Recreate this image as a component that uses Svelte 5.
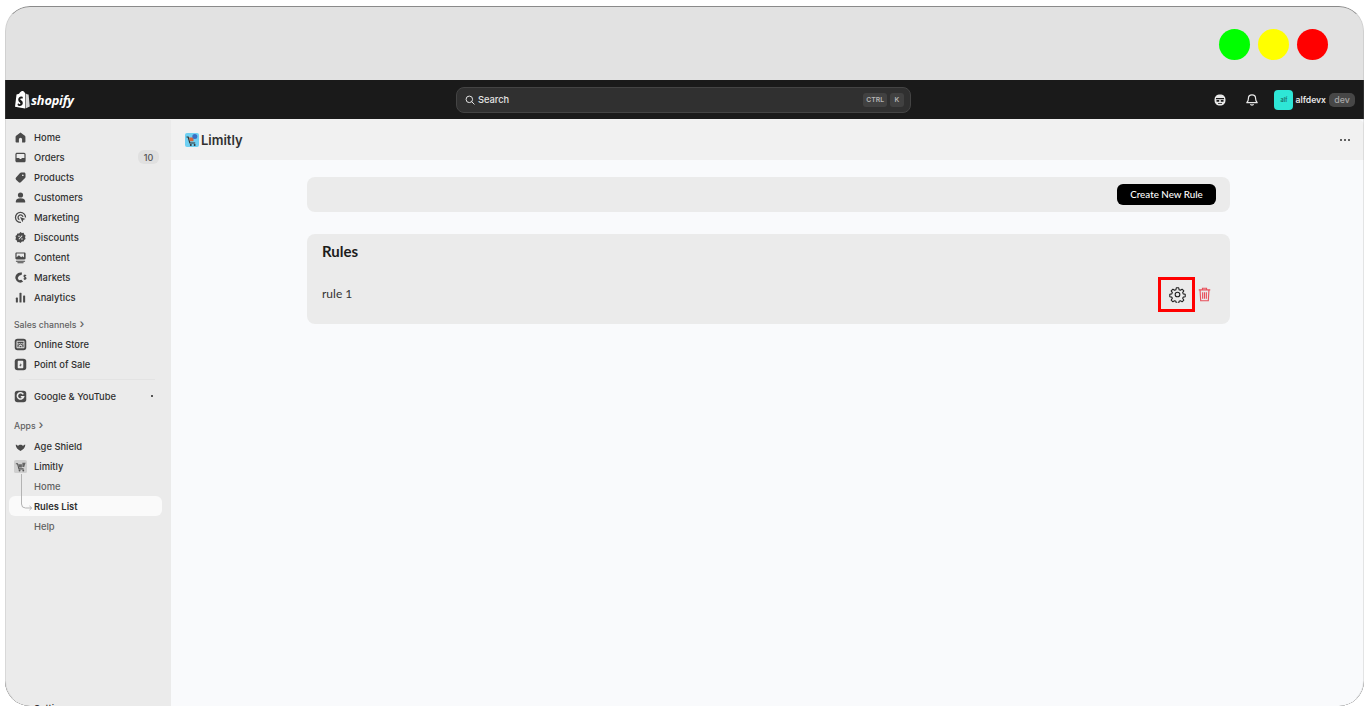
<script lang="ts">
	// Sidebar rows, icon is looked up by name in the markup below
	const mainNav = [
		{ label: 'Home', icon: 'home' },
		{ label: 'Orders', icon: 'orders', badge: '10' },
		{ label: 'Products', icon: 'products' },
		{ label: 'Customers', icon: 'customers' },
		{ label: 'Marketing', icon: 'marketing' },
		{ label: 'Discounts', icon: 'discounts' },
		{ label: 'Content', icon: 'content' },
		{ label: 'Markets', icon: 'markets' },
		{ label: 'Analytics', icon: 'analytics' }
	];
	const channels = [
		{ label: 'Online Store', icon: 'store' },
		{ label: 'Point of Sale', icon: 'pos' }
	];
</script>

{#snippet navIcon(name: string)}
	<svg class="nav-icon" viewBox="0 0 14 14" fill="#4a4a4a" aria-hidden="true">
		{#if name === 'home'}
			<path d="M7 1.600 2.300 5.200c-.4.300-.6.700-.6 1.200v4.800c0 .7.500 1.200 1.200 1.200h2.400V9a1.700 1.700 0 0 1 3.400 0v3.400h2.400c.7 0 1.200-.5 1.200-1.200V6.400c0-.5-.2-.9-.6-1.200L7 1.600Z" />
		{:else if name === 'orders'}
			<path fill-rule="evenodd" d="M3.200 1.800h7.600c1 0 1.700.8 1.700 1.700v7c0 1-.8 1.700-1.700 1.700H3.200c-1 0-1.700-.8-1.700-1.700v-7c0-1 .8-1.700 1.700-1.700Zm0 1.400a.4.4 0 0 0-.4.3v4h2.400c.3 0 .5.2.6.4l.4.8h1.600l.4-.8c.1-.2.3-.4.6-.4h2.400v-4a.4.4 0 0 0-.4-.3H3.200Z" />
		{:else if name === 'products'}
			<path fill-rule="evenodd" d="M7.600 1.700h3.200c.9 0 1.600.7 1.600 1.600v3.200c0 .4-.2.8-.5 1.100l-4.600 4.600c-.6.600-1.600.6-2.200 0L2.200 9.300c-.6-.6-.6-1.600 0-2.200l4.300-4.900c.3-.3.700-.5 1.100-.5Zm1.900 2a.9.900 0 1 0 0 1.800.9.900 0 0 0 0-1.800Z" />
		{:else if name === 'customers'}
			<circle cx="7" cy="4.300" r="2.800" /><path d="M2 11c0-2 1.800-3.100 5-3.100s5 1.100 5 3.100v1.400H2V11Z" />
		{:else if name === 'marketing'}
			<path fill="none" stroke="#4a4a4a" stroke-width="1.400" d="M7.500 12.300A5.400 5.400 0 1 1 12.400 7M5.800 9.300A2.700 2.700 0 1 1 9.700 6.400" /><path d="m6.500 6.500 6 2-2.400 1-1 2.600-2.600-5.600Z" />
		{:else if name === 'discounts'}
			<path fill-rule="evenodd" d="m7 1 1.500 1.100 1.900-.1.600 1.800 1.500 1.100-.6 1.800.6 1.800-1.500 1.100-.6 1.800-1.900-.1L7 13l-1.500-1.100-1.900.1L3 10.200 1.500 9.100 2.100 7.300 1.500 5.500 3 4.400l.6-1.800 1.900.1L7 1Zm1.500 3.600L4.900 8.500l.7.7 3.600-3.900-.7-.7ZM5.400 4.900a.8.800 0 1 0 0 1.600.8.800 0 0 0 0-1.600Zm3.200 2.800a.8.800 0 1 0 0 1.600.8.800 0 0 0 0-1.600Z" />
		{:else if name === 'content'}
			<path fill-rule="evenodd" d="M2.800 1.500h8.400c.8 0 1.300.6 1.300 1.300v5c0 .8-.6 1.300-1.300 1.300H2.800c-.8 0-1.300-.6-1.300-1.300v-5c0-.8.6-1.300 1.300-1.300Zm0 1.200v4l2.500-2 2.400 2 1.400-1 1.700 1.200V2.700H2.800Z" /><rect x="2" y="10.400" width="10" height="1.100" rx=".5" /><rect x="3.500" y="12.200" width="7" height="1" rx=".5" />
		{:else if name === 'markets'}
			<path fill-rule="evenodd" d="M7 1.500a5.500 5.500 0 1 0 2.800 10.200L8 9.500l-2.700.4L4 7.500 5.500 5l2.800-1L8.600 1.700A5.500 5.500 0 0 0 7 1.500Z" /><path fill="none" stroke="#4a4a4a" stroke-width="1.100" d="M13 5.200c-.3-.7-2.200-.9-2.300.3-.1 1.300 2.400 1 2.300 2.300-.1 1.200-2 1.100-2.500.2M11.700 3.800v6" />
		{:else if name === 'analytics'}
			<rect x="2" y="7" width="2.200" height="5.500" rx=".7" /><rect x="5.900" y="2" width="2.200" height="10.500" rx=".7" /><rect x="9.800" y="4.800" width="2.200" height="7.700" rx=".7" />
		{:else if name === 'store'}
			<rect x=".8" y=".8" width="12.400" height="12.400" rx="3" /><path fill="none" stroke="#ebebeb" stroke-width="1" d="M3.200 3.500h7.600v7H3.200zM3.200 5.800c1 1 1.800 1 2.500 0 .8 1 1.800 1 2.600 0 .7 1 1.500 1 2.500 0M5.500 10.500V8h3v2.500" />
		{:else if name === 'pos'}
			<rect x=".8" y=".8" width="12.400" height="12.400" rx="3" /><path fill="#ebebeb" fill-rule="evenodd" d="M5 3h4.200c.5 0 .8.3.8.8v6.400c0 .5-.3.8-.8.8H4.800a.8.800 0 0 1-.8-.8V4c0-.5.400-1 1-1Zm2.300 2-1.500 3.300h1.300L6.600 10l1.800-3H7l.3-2Z" />
		{:else if name === 'google'}
			<rect x=".8" y=".8" width="12.400" height="12.400" rx="3" /><path fill="none" stroke="#ebebeb" stroke-width="1.700" d="M10 4.700A3.400 3.400 0 1 0 10.300 7.200H7.300" />
		{:else if name === 'age'}
			<path d="M1.800 5.200c1.300 0 2 .6 2.400 1.300.7-1 1.700-1.300 2.800-1.300s2.100.3 2.800 1.300c.4-.7 1.100-1.300 2.400-1.300-.2 3-2.200 5.400-5.200 6.600-3-1.200-5-3.600-5.200-6.600Z" />
		{/if}
	</svg>
{/snippet}

<div class="window">
	<div class="chrome">
		<span class="light green"></span>
		<span class="light yellow"></span>
		<span class="light red"></span>
	</div>

	<header class="topbar">
		<div class="brand">
			<svg class="bag" viewBox="0 0 16 18" aria-hidden="true">
				<path fill="#fff" d="M11.300 2.500 10.500 1.900C10 .8 9.200.3 8.400.4 7 .5 5.800 1.700 5.100 3.300L2.500 4.100 1 16.200l10 1.800V2.600l.3-.1Z" />
				<path fill="#d8d8d8" d="M11.500 2.700 13 3.800l1.600.2L15.800 16l-4.300 2V2.700Z" />
				<path fill="#1a1a1a" d="M8.900 6.500 8.400 8.200c-.5-.2-1-.3-1.400-.2-.8.100-.9.600-.7 1 .5.800 2.500 1.300 2.500 3.400 0 2-1.500 3-3 3-1 0-1.900-.5-2.300-1l.5-1.600c.5.400 1.200.9 1.700.9.500 0 .8-.5.700-.9-.3-1.100-2.200-1.400-2.200-3.500 0-1.800 1.200-3.200 3-3.300.8-.1 1.400.2 1.700.5Z" />
			</svg>
			<span class="wordmark">shopify</span>
		</div>

		<div class="search">
			<svg class="search-icon" viewBox="0 0 12 12" fill="none" stroke="#e3e3e3" stroke-width="1.200" aria-hidden="true">
				<circle cx="5.200" cy="5.200" r="3.900" /><path d="m8 8 3 3" stroke-linecap="round" />
			</svg>
			<span class="search-text">Search</span>
			<kbd class="key">CTRL</kbd>
			<kbd class="key">K</kbd>
		</div>

		<div class="account">
			<svg class="top-icon" viewBox="0 0 14 14" aria-hidden="true">
				<path fill="#e8e8e8" d="M7 1.500c3.300 0 5.500 1.800 5.500 5.500S10.300 12.500 7 12.500 1.500 10.700 1.500 7 3.700 1.500 7 1.500Z" />
				<path fill="#1a1a1a" d="M3 5h8v1.200H3zM3.500 7h2.700v1.800H3.500zM7.800 7h2.700v1.800H7.800zM5 10.200h4v.9H5z" />
			</svg>
			<svg class="top-icon bell" viewBox="0 0 14 14" fill="none" stroke="#e8e8e8" stroke-width="1.200" aria-hidden="true">
				<path d="M7 1.800c-2.200 0-3.600 1.600-3.600 3.600 0 2.400-1 3.300-1.600 4.300h10.400c-.6-1-1.600-1.900-1.600-4.300 0-2-1.400-3.600-3.600-3.600Z" stroke-linejoin="round" /><path d="M5.400 11.300c.4 1 2.800 1 3.200 0" />
			</svg>
			<span class="avatar">alf</span>
			<span class="store-name">alfdevx</span>
			<span class="dev">dev</span>
		</div>
	</header>

	<div class="body">
		<nav class="sidebar">
			{#each mainNav as item}
				<div class="row">
					{@render navIcon(item.icon)}
					<span>{item.label}</span>
					{#if item.badge}<span class="badge">{item.badge}</span>{/if}
				</div>
			{/each}

			<div class="section-title">Sales channels <span class="chev">›</span></div>
			{#each channels as item}
				<div class="row">
					{@render navIcon(item.icon)}
					<span>{item.label}</span>
				</div>
			{/each}

			<hr class="rule" />

			<div class="row">
				{@render navIcon('google')}
				<span>Google &amp; YouTube</span>
				<span class="pin"></span>
			</div>

			<div class="section-title apps">Apps <span class="chev">›</span></div>
			<div class="row">
				{@render navIcon('age')}
				<span>Age Shield</span>
			</div>
			<div class="row">
				<svg class="nav-icon" viewBox="0 0 14 14" aria-hidden="true">
					<rect width="14" height="14" rx="2" fill="#cfcfcf" />
					<path fill="none" stroke="#555" stroke-width="1.200" d="M2 4h1.800l1.500 5.500h5" />
					<path fill="#666" d="M4.500 4.500h4v3.500h-3zM9 3h3.500L11 7.500H9z" />
					<circle cx="6" cy="11.300" r="1" fill="#555" /><circle cx="10" cy="11.300" r="1" fill="#555" />
				</svg>
				<span>Limitly</span>
			</div>
			<div class="sub-list">
				<svg class="tree" viewBox="0 0 16 48" fill="none" stroke="#b3b3b3" stroke-width="1" aria-hidden="true">
					<path d="M2.500 0v30q0 4 4 4h6M10.500 32l2.200 2-2.200 2" />
				</svg>
				<div class="row sub">Home</div>
				<div class="row sub active">Rules List</div>
				<div class="row sub">Help</div>
			</div>

			<div class="row settings"><span>Settings</span></div>
		</nav>

		<main class="content">
			<div class="page-head">
				<svg class="app-logo" viewBox="0 0 14 14" aria-hidden="true">
					<rect width="14" height="14" rx="2" fill="#6fd0f2" />
					<path fill="none" stroke="#333" stroke-width="1.200" d="M1.500 4h1.700l1.600 6h5.400" />
					<path fill="#d9653b" d="M4 4.500h4.500v3.700H5z" />
					<circle cx="9.800" cy="3.600" r="2.500" fill="#3a6fc4" />
					<circle cx="5.800" cy="12" r="1" fill="#333" /><circle cx="9.600" cy="12" r="1" fill="#333" />
				</svg>
				<h1>Limitly</h1>
				<svg class="more" viewBox="0 0 10 2" fill="#303030" aria-hidden="true">
					<circle cx="1" cy="1" r="1" /><circle cx="5" cy="1" r="1" /><circle cx="9" cy="1" r="1" />
				</svg>
			</div>

			<div class="page">
				<section class="card action-card">
					<button type="button" class="primary">Create New Rule</button>
				</section>

				<section class="card rules-card">
					<h2>Rules</h2>
					<div class="rule-row">
						<span class="rule-name">rule 1</span>
						<span class="gear-box">
							<svg viewBox="0 0 24 24" width="17" height="17" fill="none" stroke="#1f1f1f" stroke-width="1.500" stroke-linejoin="round" aria-hidden="true">
								<circle cx="12" cy="12" r="3.300" />
								<path d="M10.300 2.500h3.400l.6 2.900 1.700.7 2.500-1.600 2.400 2.400-1.600 2.500.7 1.700 2.900.6v3.400l-2.900.6-.7 1.700 1.600 2.500-2.400 2.400-2.500-1.600-1.700.7-.6 2.900h-3.400l-.6-2.900-1.700-.7-2.500 1.600-2.400-2.400 1.600-2.500-.7-1.700-2.900-.6v-3.400l2.900-.6.7-1.700-1.600-2.500 2.400-2.400 2.500 1.600 1.700-.7.6-2.900Z" />
							</svg>
						</span>
						<svg class="trash" viewBox="0 0 14 16" fill="none" stroke="#e8505b" stroke-width="1.200" aria-hidden="true">
							<path d="M.8 3h12.400M4.800 3V1.200h4.400V3M2.200 3l.7 11.800h8.200L11.800 3M5 5.500v7M7 5.500v7M9 5.500v7" />
						</svg>
					</div>
				</section>
			</div>
		</main>
	</div>
</div>

<style>
	:global(body) {
		background: #fff;
	}

	.window {
		width: 1359px;
		height: 700px;
		margin: 6px 0 0 5px;
		border-radius: 25px;
		overflow: hidden;
		display: flex;
		flex-direction: column;
		font-family: Inter, 'Liberation Sans', sans-serif;
		background: #e2e2e2;
		position: relative;
	}

	/* thin frame line, strongest along the top edge */
	.window::after {
		content: '';
		position: absolute;
		inset: 0;
		border-radius: 25px;
		border: 1px solid transparent;
		border-top-color: #8a8a8a;
		border-left-color: rgba(138, 138, 138, 0.2);
		border-right-color: rgba(138, 138, 138, 0.2);
		pointer-events: none;
	}

	.chrome {
		height: 74px;
		flex: none;
		display: flex;
		justify-content: flex-end;
		align-items: center;
		gap: 8px;
		padding: 2px 36px 0 0;
		box-sizing: border-box;
	}

	.light {
		width: 31px;
		height: 31px;
		border-radius: 50%;
	}

	.green {
		background: #00ff00;
	}

	.yellow {
		background: #ffff00;
	}

	.red {
		background: #ff0000;
	}

	.topbar {
		height: 39px;
		flex: none;
		background: #1a1a1a;
		display: grid;
		grid-template-columns: 1fr 455px 1fr;
		align-items: center;
		padding: 0 9px 0 9px;
		box-sizing: border-box;
	}

	.brand {
		display: flex;
		align-items: center;
		gap: 1px;
	}

	.bag {
		width: 16px;
		height: 19px;
	}

	.wordmark {
		font-family: 'Open Sans', sans-serif;
		font-style: italic;
		font-weight: 700;
		font-size: 12.800px;
		color: #fff;
		letter-spacing: -0.2px;
	}

	.search {
		height: 26px;
		background: #303030;
		border: 1px solid #444;
		border-radius: 8px;
		box-sizing: border-box;
		display: flex;
		align-items: center;
		gap: 3px;
		padding: 0 6px 0 8px;
		margin-left: -1px;
		width: 455px;
	}

	.search-icon {
		width: 10px;
		height: 10px;
	}

	.search-text {
		font-size: 9.300px;
		font-weight: 500;
		color: #e3e3e3;
		flex: 1;
	}

	.key {
		font-family: Inter, sans-serif;
		font-size: 6.800px;
		font-weight: 600;
		color: #b5b5b5;
		background: #414141;
		border-radius: 3px;
		height: 14px;
		padding: 0 3px;
		min-width: 8px;
		display: flex;
		align-items: center;
		justify-content: center;
	}

	.account {
		display: flex;
		align-items: center;
		justify-content: flex-end;
		color: #e8e8e8;
	}

	.top-icon {
		width: 14px;
		height: 14px;
		margin-right: 18px;
	}

	.bell {
		margin-right: 15px;
	}

	.avatar {
		width: 19px;
		height: 20px;
		background: #2ee6d6;
		border-radius: 4px;
		font-size: 5.500px;
		font-weight: 600;
		color: #1b6d66;
		display: flex;
		align-items: center;
		justify-content: center;
	}

	.store-name {
		font-size: 8.600px;
		font-weight: 600;
		margin-left: 2px;
	}

	.dev {
		font-size: 8.800px;
		font-weight: 500;
		color: #a8a8a8;
		background: #474747;
		border-radius: 5px;
		height: 14px;
		width: 26px;
		margin-left: 3px;
		display: flex;
		align-items: center;
		justify-content: center;
	}

	.body {
		flex: 1;
		min-height: 0;
		display: flex;
		border-top: 1px solid #f1f1f1;
		background: #1a1a1a;
	}

	.sidebar {
		width: 166px;
		flex: none;
		background: #ebebeb;
		padding: 7px 0 0 4px;
		box-sizing: border-box;
		overflow: hidden;
		display: flex;
		flex-direction: column;
	}

	.row {
		height: 20px;
		flex: none;
		display: flex;
		align-items: center;
		width: 153px;
		padding-left: 5px;
		box-sizing: border-box;
		font-size: 9.400px;
		font-weight: 500;
		color: #303030;
		border-radius: 6px;
		position: relative;
	}

	.nav-icon {
		width: 13px;
		height: 13px;
		flex: none;
		margin-right: 7px;
	}

	.badge {
		margin-left: auto;
		margin-right: 3px;
		background: #e0e0e0;
		color: #555;
		font-size: 9px;
		border-radius: 6px;
		width: 21px;
		height: 14px;
		display: flex;
		align-items: center;
		justify-content: center;
	}

	.section-title {
		height: 20px;
		margin: 8px 0 -1px;
		padding-left: 5px;
		font-size: 8.700px;
		font-weight: 500;
		color: #616161;
		display: flex;
		align-items: center;
		gap: 3px;
		flex: none;
	}

	.section-title.apps {
		margin: 10px 0 0;
	}

	.chev {
		font-size: 12px;
		line-height: 1;
		margin-top: -2px;
	}

	.rule {
		width: 136px;
		margin: 5px 0 6px 10px;
		border: 0;
		border-top: 1px solid #e3e3e3;
		flex: none;
	}

	.pin {
		width: 2.500px;
		height: 2.500px;
		border-radius: 50%;
		background: #222;
		margin-left: auto;
		margin-right: 9px;
	}

	.sub-list {
		position: relative;
		flex: none;
	}

	.tree {
		position: absolute;
		left: 10px;
		top: -2px;
		width: 16px;
		height: 48px;
		z-index: 1;
	}

	.sub {
		padding-left: 25px;
		color: #616161;
	}

	.active {
		background: #fafafa;
		color: #303030;
		font-weight: 600;
	}

	/* only the tops of the letters show at the window's bottom edge */
	.settings {
		margin-top: 162px;
		padding-left: 25px;
	}

	.content {
		flex: 1;
		min-width: 0;
		display: flex;
		flex-direction: column;
		background: #f9fafc;
	}

	.page-head {
		height: 40px;
		flex: none;
		background: #f1f1f1;
		display: flex;
		align-items: center;
		padding: 0 14px 0 14px;
		border-top-right-radius: 5px;
	}

	.app-logo {
		width: 14px;
		height: 14px;
		flex: none;
	}

	h1 {
		font-size: 13px;
		font-weight: 600;
		color: #303030;
		margin: 0 0 0 2px;
		flex: 1;
	}

	.more {
		width: 10px;
		height: 2px;
	}

	.page {
		width: 923px;
		margin-left: 136px;
		padding-top: 17px;
		display: flex;
		flex-direction: column;
		gap: 22px;
		font-family: Lato, sans-serif;
	}

	.card {
		background: #ebebeb;
		border-radius: 8px;
	}

	.action-card {
		height: 35px;
		display: flex;
		align-items: center;
		justify-content: flex-end;
		padding: 0 14px;
	}

	.primary {
		width: 99px;
		height: 21px;
		border: 0;
		background: #000;
		color: #fff;
		border-radius: 6px;
		font-family: Lato, sans-serif;
		font-size: 9.800px;
		font-weight: 500;
		padding: 0 0 2px;
	}

	.rules-card {
		height: 90px;
		padding: 8px 15px 0;
		box-sizing: border-box;
	}

	h2 {
		font-size: 15px;
		font-weight: 700;
		color: #1c1c1c;
		margin: 0;
		line-height: 18px;
	}

	.rule-row {
		display: flex;
		align-items: center;
		margin-top: 18px;
		padding-right: 4px;
		height: 33px;
	}

	.rule-name {
		font-size: 12px;
		color: #333;
		flex: 1;
		margin-top: -2px;
	}

	.gear-box {
		width: 37px;
		height: 35px;
		flex: none;
		box-sizing: border-box;
		border: 3px solid #ff0000;
		display: flex;
		align-items: center;
		justify-content: center;
		padding-left: 2px;
	}

	.trash {
		width: 13px;
		height: 15px;
		margin-left: 3px;
	}
</style>
